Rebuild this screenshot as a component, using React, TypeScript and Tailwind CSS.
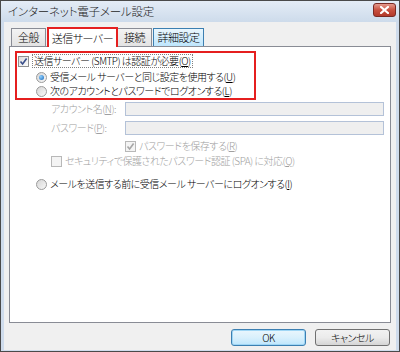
import React from 'react';

const jp = "font-['Noto_Sans_CJK_JP',sans-serif] [font-feature-settings:'palt']";

// Windows 7 style check box
const CheckBox: React.FC<{ checked?: boolean; disabled?: boolean }> = ({ checked, disabled }) => (
  <span
    className={`relative flex h-[11px] w-[11px] shrink-0 items-center justify-center border ${
      disabled ? 'border-[#b8b8b8] bg-[#f4f4f4]' : 'border-[#8e8f8f] bg-gradient-to-br from-[#dcdcdc] to-[#fcfcfc]'
    }`}
  >
    {checked && (
      <svg width="9" height="9" viewBox="0 0 9 9">
        <path
          d="M1.5 4.5 L3.6 7 L7.6 1.5"
          fill="none"
          stroke={disabled ? '#a6a6a6' : '#3a4f8a'}
          strokeWidth="1.6"
        />
      </svg>
    )}
  </span>
);

const Radio: React.FC<{ checked?: boolean }> = ({ checked }) => (
  <span className="flex h-[11px] w-[11px] shrink-0 items-center justify-center rounded-full border border-[#9a9a9a] bg-gradient-to-br from-[#d6d6d6] to-[#f8f8f8]">
    {checked && (
      <span className="h-[5px] w-[5px] rounded-full bg-[radial-gradient(circle_at_35%_35%,#8fd0ff,#1565b8)]" />
    )}
  </span>
);

const Key: React.FC<{ k: string }> = ({ k }) => (
  <>
    (<span className="underline underline-offset-1">{k}</span>)
  </>
);

export default function App() {
  return (
    <div
      className={`flex h-[352px] w-[400px] flex-col whitespace-nowrap border border-[#4a4a4a] bg-[#cfdcec] text-[10px] font-light leading-none tracking-[-0.5px] text-black ${jp}`}
    >
      {/* Title bar */}
      <div className="flex h-[21px] shrink-0 items-center justify-between bg-gradient-to-b from-[#e4ecf6] to-[#cddbeb] pl-[7px] pr-[3px]">
        <span className="text-[11.5px] tracking-[-0.2px] text-[#1e1e1e]">インターネット電子メール設定</span>
        <div className="mt-[-3px] flex h-[14px] w-[23px] items-center justify-center rounded-[3px] border border-[#7a2a24] bg-gradient-to-b from-[#e59a8e] via-[#c9503f] to-[#b23a2a]">
          <svg width="9" height="8" viewBox="0 0 9 8">
            <path d="M1 1 L8 7 M8 1 L1 7" stroke="#ffffff" strokeWidth="2.2" strokeLinecap="square" />
          </svg>
        </div>
      </div>

      {/* Body */}
      <div className="mx-[3px] mb-[1px] flex flex-1 flex-col bg-[#f0f0f0] px-[5px]">
        {/* Tabs */}
        <div className="mt-[6px] flex h-[18px] items-end pl-[2px] text-[11px]">
          <div className="flex h-[18px] w-[35px] items-center justify-center border border-b-0 border-[#898c95] bg-gradient-to-b from-[#f3f3f3] to-[#e3e3e3]">
            全般
          </div>
          <div className="relative z-10 mb-[-1px] ml-[1px] flex h-[20px] w-[71px] items-center justify-center border-2 border-b-0 border-[#e51f1f] bg-white">
            送信サーバー
          </div>
          <div className="flex h-[18px] w-[34px] items-center justify-center border border-b-0 border-l-0 border-[#898c95] bg-gradient-to-b from-[#f3f3f3] to-[#e3e3e3]">
            接続
          </div>
          <div className="ml-[1px] flex h-[18px] w-[51px] items-center justify-center border border-b-0 border-[#3c7fb1] bg-gradient-to-b from-[#eaf6fd] to-[#bee6fd]">
            詳細設定
          </div>
        </div>

        {/* Tab panel */}
        <div className="flex h-[277px] flex-col border border-[#898c95] bg-white pl-[5px] pr-[6px] pt-[4px]">
          <div className="flex h-[49px] w-[241px] flex-col border-2 border-[#e51f1f] pl-[1px] pt-[1px]">
            <div className="flex h-[14px] items-center gap-[3px]">
              <CheckBox checked />
              <span className="border border-dotted border-[#808080] px-[1px] py-[1px]">
                送信サーバー&nbsp;(SMTP)&nbsp;は認証が必要<Key k="O" />
              </span>
            </div>
            <div className="mt-[2px] flex h-[16px] items-center gap-[3px] pl-[18px]">
              <Radio checked />
              <span>
                受信メール&nbsp;サーバーと同じ設定を使用する<Key k="U" />
              </span>
            </div>
            <div className="flex h-[16px] items-center gap-[3px] pl-[18px]">
              <Radio />
              <span>
                次のアカウントとパスワードでログオンする<Key k="L" />
              </span>
            </div>
          </div>

          <div className="mt-[2px] flex h-[14px] items-center pl-[36px] text-[#a0a0a0]">
            <span className="w-[74px]">
              アカウント名<Key k="N" />:
            </span>
            <div className="h-[14px] flex-1 border border-[#b4c2d8] bg-[#efefef]" />
          </div>
          <div className="mt-[5px] flex h-[14px] items-center pl-[36px] text-[#a0a0a0]">
            <span className="w-[74px]">
              パスワード<Key k="P" />:
            </span>
            <div className="h-[14px] flex-1 border border-[#b4c2d8] bg-[#efefef]" />
          </div>
          <div className="mt-[5px] flex h-[12px] items-center gap-[3px] pl-[110px] text-[#a0a0a0]">
            <CheckBox checked disabled />
            <span>
              パスワードを保存する<Key k="R" />
            </span>
          </div>
          <div className="mt-[2px] flex h-[14px] items-center gap-[3px] pl-[36px] text-[#a0a0a0]">
            <CheckBox disabled />
            <span>
              セキュリティで保護されたパスワード認証&nbsp;(SPA)&nbsp;に対応<Key k="Q" />
            </span>
          </div>
          <div className="mt-[8px] flex h-[16px] items-center gap-[3px] pl-[21px]">
            <Radio />
            <span>
              メールを送信する前に受信メール&nbsp;サーバーにログオンする<Key k="I" />
            </span>
          </div>
        </div>

        {/* Buttons */}
        <div className="mt-[6px] flex justify-end gap-[9px] pr-[1px]">
          <button className="flex h-[17px] w-[75px] items-center justify-center rounded-[3px] border border-[#3c7fb1] bg-gradient-to-b from-[#eaf6fd] via-[#d9f0fc] to-[#bee6fd] text-[10px] shadow-[inset_0_0_0_1px_#9fd6f5]">
            OK
          </button>
          <button className="flex h-[17px] w-[75px] items-center justify-center rounded-[3px] border border-[#707070] bg-gradient-to-b from-[#f2f2f2] via-[#ebebeb] to-[#d5d5d5] text-[10px]">
            キャンセル
          </button>
        </div>
      </div>
    </div>
  );
}
